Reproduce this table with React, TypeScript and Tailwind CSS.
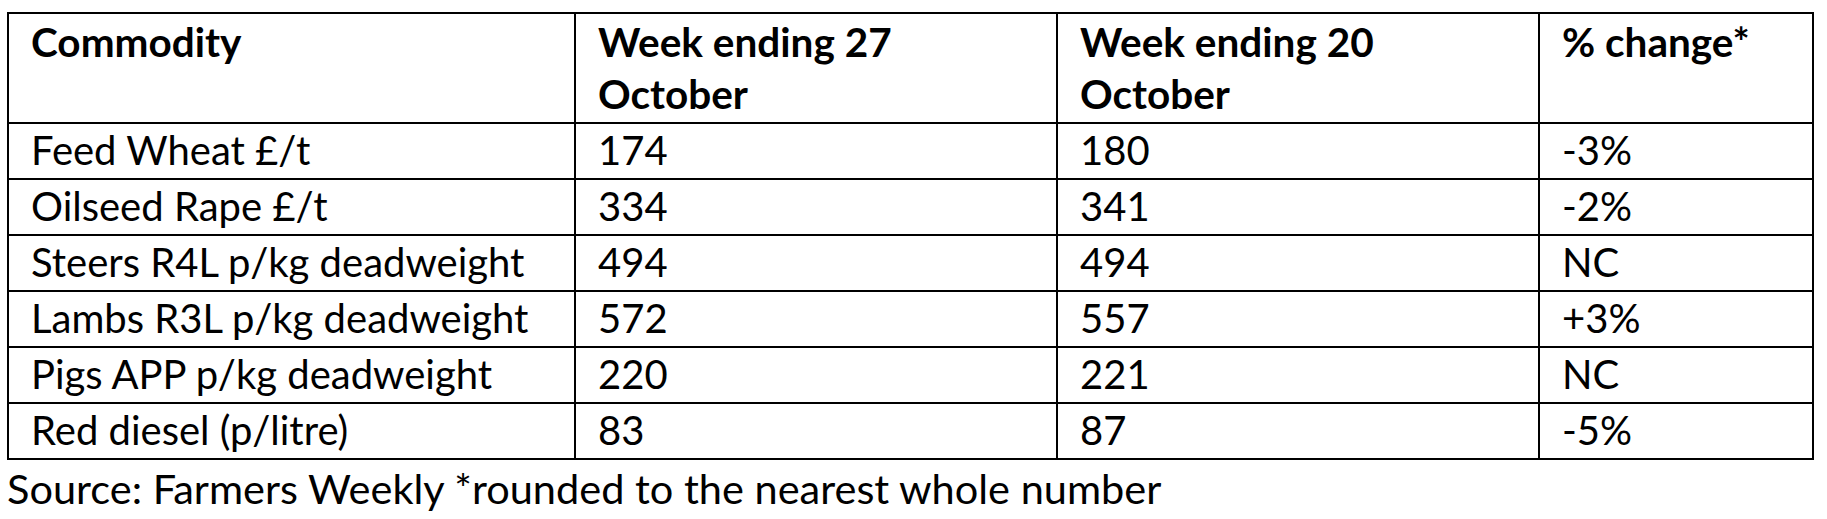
const rows = [
  { name: 'Feed Wheat £/t', current: '174', previous: '180', change: '-3%' },
  { name: 'Oilseed Rape £/t', current: '334', previous: '341', change: '-2%' },
  { name: 'Steers R4L p/kg deadweight', current: '494', previous: '494', change: 'NC' },
  { name: 'Lambs R3L p/kg deadweight', current: '572', previous: '557', change: '+3%' },
  { name: 'Pigs APP p/kg deadweight', current: '220', previous: '221', change: 'NC' },
  { name: 'Red diesel (p/litre)', current: '83', previous: '87', change: '-5%' },
];

const cell = 'border-2 border-black px-[22px] align-top';
const head = `${cell} pt-[2px] pb-[2px] text-left font-bold text-[40.5px]`;

export default function App() {
  return (
    <div className="min-h-screen bg-white pt-[12px] pl-[7px] text-black font-['Lato','Liberation_Sans',sans-serif] text-[40px] leading-[52px]">
      <table className="w-[1805px] table-fixed border-collapse border-2 border-black">
        <colgroup>
          <col className="w-[567px]" />
          <col className="w-[482px]" />
          <col className="w-[482px]" />
          <col className="w-[274px]" />
        </colgroup>
        <thead>
          <tr>
            <th className={head}>Commodity</th>
            <th className={head}>
              Week ending 27
              <br />
              October
            </th>
            <th className={head}>
              Week ending 20
              <br />
              October
            </th>
            <th className={head}>% change*</th>
          </tr>
        </thead>
        <tbody>
          {rows.map((row) => (
            <tr key={row.name} className="h-[56px]">
              <td className={cell}>{row.name}</td>
              <td className={cell}>{row.current}</td>
              <td className={cell}>{row.previous}</td>
              <td className={cell}>{row.change}</td>
            </tr>
          ))}
        </tbody>
      </table>
      <p className="pt-[2px] text-[41.5px]">Source: Farmers Weekly *rounded to the nearest whole number</p>
    </div>
  );
}
